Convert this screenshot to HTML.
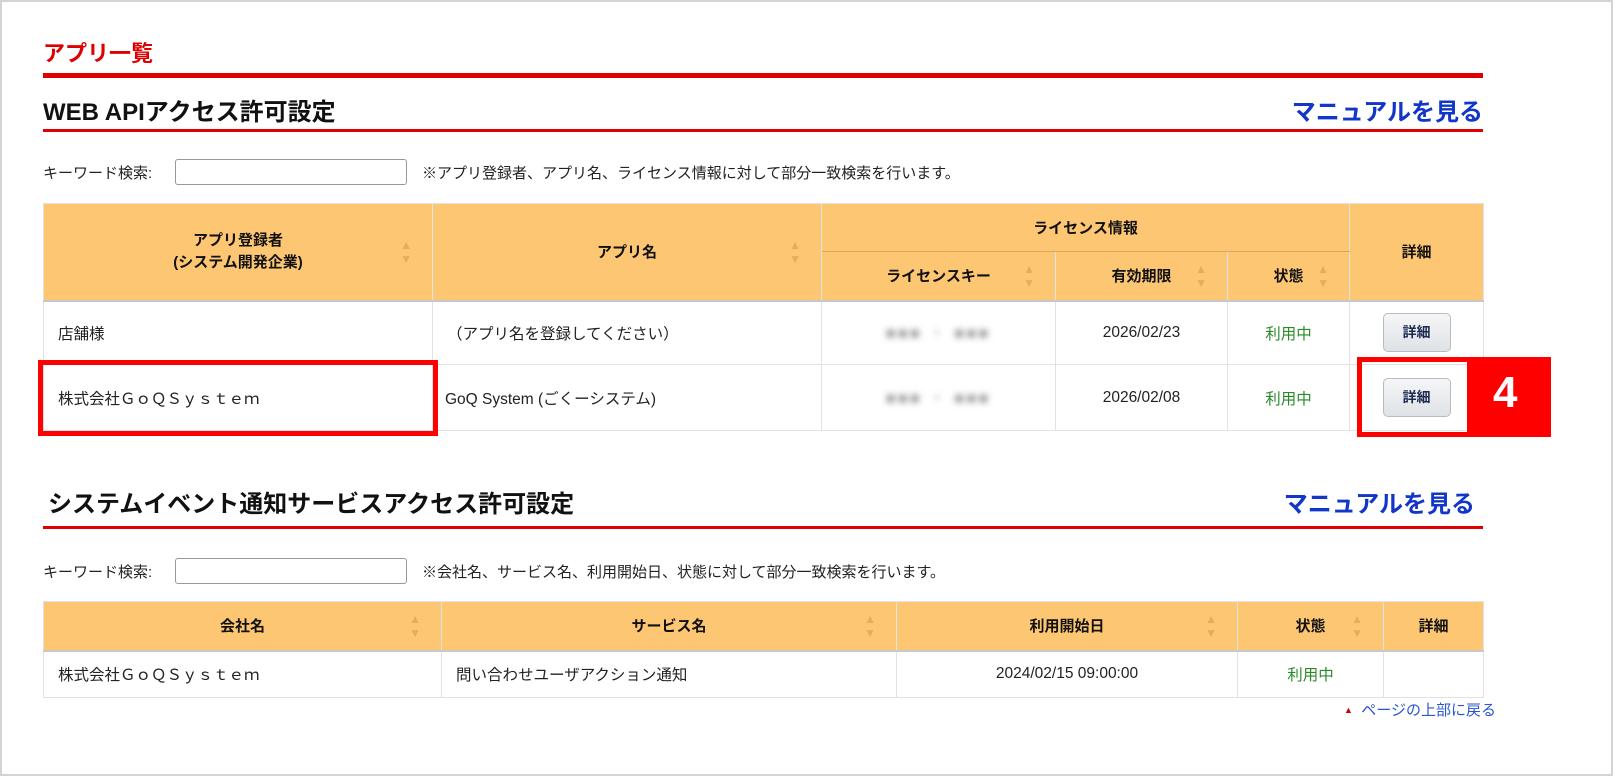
<!DOCTYPE html>
<html><head><meta charset="utf-8"><style>
*{margin:0;padding:0;box-sizing:border-box}
body{width:1614px;height:777px;background:#fff;font-family:"Liberation Sans","Noto Sans CJK JP",sans-serif;position:relative;overflow:hidden;color:#222}
.a{position:absolute;white-space:nowrap}
.frame{position:absolute;left:0;top:0;width:1613px;height:776px;border:2px solid #d4d4d4}
.h1{left:43px;top:36px;font-size:22px;font-weight:bold;color:#e00000}
.h2{font-size:24px;font-weight:bold;color:#111}
.man{font-size:24px;font-weight:bold;color:#1236c8}
.line{position:absolute;left:43px;width:1440px;background:#e00000}
.kw{font-size:15px;color:#222}
.inp{position:absolute;width:232px;height:26px;border:1px solid #999;border-radius:3px;background:#fff}
table{position:absolute;border-collapse:collapse;font-size:15.5px}
td,th{border:1px solid #e2e2e2;text-align:center;vertical-align:middle;position:relative}
th{background:#fdc673;font-weight:bold;color:#111;font-size:15px}
th.s::after{content:"▲\A▼";white-space:pre;position:absolute;right:20px;top:50%;transform:translateY(-50%);font-size:12px;line-height:14px;color:#e0ae62}
.hb{border-bottom:2px solid #c8c8c8}
td{color:#222}
.g{color:#2a8a2a}
.blur{filter:blur(3.5px);color:#888;letter-spacing:3px;font-size:15px}
.btn{display:inline-block;width:68px;height:39px;border:1px solid #b8bcc2;border-radius:5px;background:linear-gradient(#f5f6f8,#dfe2e6);font-weight:bold;font-size:14px;color:#1a2a50;line-height:37px}
</style></head><body>
<div class="frame"></div>
<div class="a h1">アプリ一覧</div>
<div class="line" style="top:73px;height:5px"></div>
<div class="a h2" style="left:43px;top:92px">WEB APIアクセス許可設定</div>
<div class="a man" style="right:131px;top:92px">マニュアルを見る</div>
<div class="line" style="top:129px;height:3px"></div>
<div class="a kw" style="left:43px;top:162px">キーワード検索:</div>
<div class="inp" style="left:175px;top:159px"></div>
<div class="a kw" style="left:422px;top:162px">※アプリ登録者、アプリ名、ライセンス情報に対して部分一致検索を行います。</div>

<table style="left:43px;top:203px;width:1441px">
<tr style="height:48px"><th rowspan="2" class="s hb" style="width:389px;line-height:22px">アプリ登録者<br>(システム開発企業)</th><th rowspan="2" class="s hb" style="width:389px">アプリ名</th><th colspan="3" style="border-bottom:1px solid #d9a85c">ライセンス情報</th><th rowspan="2" class="hb" style="width:134px">詳細</th></tr>
<tr style="height:49px"><th class="s hb" style="width:234px">ライセンスキー</th><th class="s hb" style="width:172px">有効期限</th><th class="s hb" style="width:122px">状態</th></tr>
<tr style="height:64px"><td style="text-align:left;padding-left:14px">店舗様</td><td style="text-align:left;padding-left:14px">（アプリ名を登録してください）</td><td><span class="blur">■■■ ・ ■■■</span></td><td>2026/02/23</td><td class="g">利用中</td><td><span class="btn">詳細</span></td></tr>
<tr style="height:66px"><td style="text-align:left;padding-left:14px">株式会社ＧｏＱＳｙｓｔｅｍ</td><td style="text-align:left;padding-left:12px">GoQ System (ごくーシステム)</td><td><span class="blur">■■■ ・ ■■■</span></td><td>2026/02/08</td><td class="g">利用中</td><td><span class="btn">詳細</span></td></tr>
</table>
<div class="a" style="left:38px;top:360px;width:400px;height:76px;border:5px solid #f00"></div>
<div class="a" style="left:1357px;top:357px;width:194px;height:80px;border:5px solid #f00;border-left:none;background:linear-gradient(90deg,transparent 110px,#f00 110px)"></div>
<div class="a" style="left:1357px;top:357px;width:5px;height:80px;background:#f00"></div>
<div class="a" style="left:1493px;top:368px;font-size:44px;font-weight:bold;color:#fff">4</div>

<div class="a h2" style="left:48px;top:484px">システムイベント通知サービスアクセス許可設定</div>
<div class="a man" style="right:139px;top:484px">マニュアルを見る</div>
<div class="line" style="top:526px;height:3px"></div>
<div class="a kw" style="left:43px;top:561px">キーワード検索:</div>
<div class="inp" style="left:175px;top:558px"></div>
<div class="a kw" style="left:422px;top:561px">※会社名、サービス名、利用開始日、状態に対して部分一致検索を行います。</div>

<table style="left:43px;top:601px;width:1441px">
<tr style="height:49px"><th class="s hb" style="width:398px">会社名</th><th class="s hb" style="width:455px">サービス名</th><th class="s hb" style="width:341px">利用開始日</th><th class="s hb" style="width:146px">状態</th><th class="hb">詳細</th></tr>
<tr style="height:47px"><td style="text-align:left;padding-left:14px">株式会社ＧｏＱＳｙｓｔｅｍ</td><td style="text-align:left;padding-left:14px">問い合わせユーザアクション通知</td><td>2024/02/15 09:00:00</td><td class="g">利用中</td><td></td></tr>
</table>
<div class="a" style="left:1344px;top:699px;font-size:15px;color:#2a55d0"><span style="color:#c00;font-size:9px;vertical-align:2px">▲</span>&nbsp; ページの上部に戻る</div>
</body></html>
